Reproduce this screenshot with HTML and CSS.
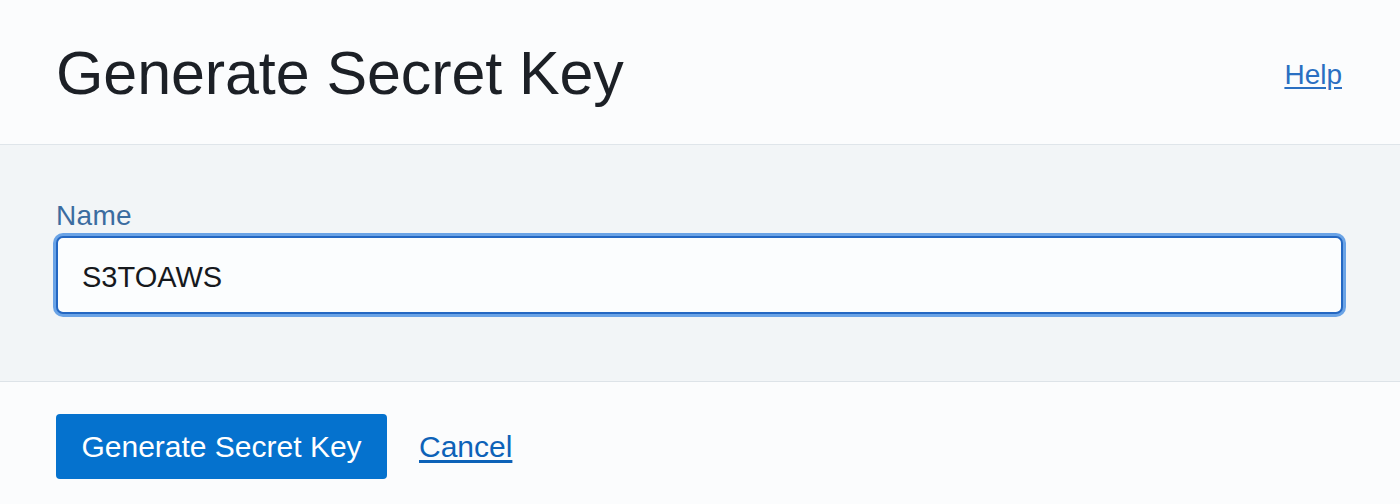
FILE: index.html
```html
<!DOCTYPE html>
<html>
<head>
<meta charset="utf-8">
<link rel="stylesheet" href="styles.css">
</head>
<body>
<div class="page">
  <header class="header">
    <h1 class="title">Generate Secret Key</h1>
    <a class="help" href="#">Help</a>
  </header>
  <section class="body">
    <label class="label" for="name">Name</label>
    <div class="input">S3TOAWS</div>
  </section>
  <footer class="footer">
    <button class="btn">Generate Secret Key</button>
    <a class="cancel" href="#">Cancel</a>
  </footer>
</div>
</body>
</html>
```
FILE: styles.css
```css
html, body {
  margin: 0;
  padding: 0;
  background: #fbfcfd;
}
.page {
  width: 1400px;
  height: 504px;
  font-family: "Liberation Sans", Arial, sans-serif;
  display: flex;
  flex-direction: column;
}
.header {
  height: 145px;
  box-sizing: border-box;
  border-bottom: 1px solid #dfe5ea;
  display: flex;
  justify-content: space-between;
  align-items: flex-start;
  padding: 0 58px 0 56px;
  background: #fbfcfd;
}
.title {
  margin: 43px 0 0 0;
  font-size: 61px;
  line-height: 61px;
  font-weight: normal;
  color: #1c2026;
  letter-spacing: -0.1px;
}
.help {
  margin-top: 59px;
  font-size: 28px;
  line-height: 32px;
  color: #2a6fc2;
  text-decoration: underline;
  text-underline-offset: 3px;
}
.body {
  height: 237px;
  box-sizing: border-box;
  border-bottom: 1px solid #dde3e8;
  background: #f2f5f7;
  padding: 0 57px 0 56px;
  display: flex;
  flex-direction: column;
}
.label {
  margin-top: 56px;
  font-size: 28px;
  line-height: 30px;
  color: #3b6ca0;
  letter-spacing: 0.3px;
}
.input {
  margin-top: 5px;
  height: 78px;
  box-sizing: border-box;
  border: 2px solid #2467c2;
  border-radius: 7px;
  box-shadow: 0 0 0 3px #6aa3e6;
  background: #fbfdfe;
  font-size: 29px;
  line-height: 74px;
  padding: 2px 0 0 24px;
  color: #16191d;
}
.footer {
  flex: 1;
  background: #fbfcfd;
  display: flex;
  align-items: flex-start;
  padding: 32px 0 0 56px;
  gap: 32px;
}
.btn {
  height: 65px;
  width: 331px;
  border: none;
  border-radius: 4px;
  background: #0572ce;
  color: #ffffff;
  font-family: "Liberation Sans", Arial, sans-serif;
  font-size: 30px;
  padding: 0;
  cursor: pointer;
}
.cancel {
  margin-top: 15px;
  font-size: 30px;
  line-height: 36px;
  color: #0d62b8;
  text-decoration: underline;
  text-underline-offset: 3px;
}
```
